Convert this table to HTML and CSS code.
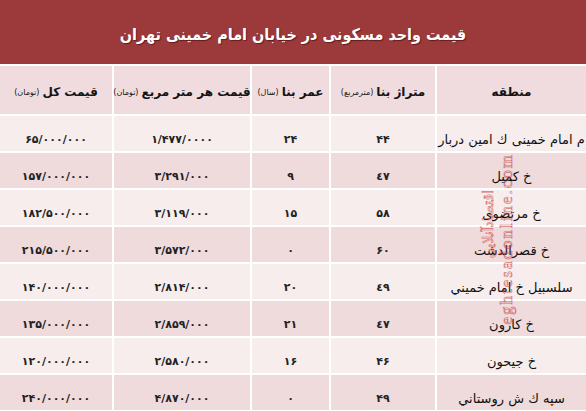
FILE: index.html
```html
<!DOCTYPE html>
<html lang="fa" dir="rtl">
<head>
<meta charset="utf-8">
<title>قیمت واحد مسکونی</title>
<link rel="stylesheet" href="styles.css">
</head>
<body>
<div class="page">
  <header class="title">قیمت واحد مسکونی در خیابان امام خمینی تهران</header>
  <div class="table">
    <div class="row head">
      <div class="cell">منطقه</div>
      <div class="cell">متراژ بنا <small>(مترمربع)</small></div>
      <div class="cell">عمر بنا <small>(سال)</small></div>
      <div class="cell">قیمت هر متر مربع <small>(تومان)</small></div>
      <div class="cell">قیمت کل <small>(تومان)</small></div>
    </div>
    <div class="row light">
      <div class="cell name">م امام خمینی ك امین دربار</div>
      <div class="cell num">۴۴</div>
      <div class="cell num">۲۴</div>
      <div class="cell num">۱/۴۷۷/۰۰۰۰</div>
      <div class="cell num">۶۵/۰۰۰/۰۰۰</div>
    </div>
    <div class="row pink">
      <div class="cell name">خ کمیل</div>
      <div class="cell num">٤٧</div>
      <div class="cell num">۹</div>
      <div class="cell num">۳/۲۹۱/۰۰۰</div>
      <div class="cell num">۱۵۷/۰۰۰/۰۰۰</div>
    </div>
    <div class="row light">
      <div class="cell name">خ مرتضوی</div>
      <div class="cell num">۵۸</div>
      <div class="cell num">۱۵</div>
      <div class="cell num">۳/۱۱۹/۰۰۰</div>
      <div class="cell num">۱۸۲/۵۰۰/۰۰۰</div>
    </div>
    <div class="row pink">
      <div class="cell name">خ قصرالدشت</div>
      <div class="cell num">۶۰</div>
      <div class="cell num">۰</div>
      <div class="cell num">۳/۵۷۲/۰۰۰</div>
      <div class="cell num">۲۱۵/۵۰۰/۰۰۰</div>
    </div>
    <div class="row light">
      <div class="cell name">سلسبیل خ امام خميني</div>
      <div class="cell num">٤٩</div>
      <div class="cell num">۲۰</div>
      <div class="cell num">۲/۸۱۴/۰۰۰</div>
      <div class="cell num">۱۴۰/۰۰۰/۰۰۰</div>
    </div>
    <div class="row pink">
      <div class="cell name">خ کارون</div>
      <div class="cell num">٤٧</div>
      <div class="cell num">۲۱</div>
      <div class="cell num">۲/۸۵۹/۰۰۰</div>
      <div class="cell num">۱۳۵/۰۰۰/۰۰۰</div>
    </div>
    <div class="row light">
      <div class="cell name">خ جیحون</div>
      <div class="cell num">۴۶</div>
      <div class="cell num">۱۶</div>
      <div class="cell num">۲/۵۸۰/۰۰۰</div>
      <div class="cell num">۱۲۰/۰۰۰/۰۰۰</div>
    </div>
    <div class="row pink">
      <div class="cell name">سپه ك ش روستاني</div>
      <div class="cell num">۴۹</div>
      <div class="cell num">۰</div>
      <div class="cell num">۴/۸۷۰/۰۰۰</div>
      <div class="cell num">۲۴۰/۰۰۰/۰۰۰</div>
    </div>
  </div>
  <div class="wm wm-latin" dir="ltr">eghtesadonline.com</div>
  <div class="wm wm-fa">اقتصادآنلاین</div>
</div>
</body>
</html>
```

FILE: styles.css
```css
html, body {
  margin: 0;
  padding: 0;
  background: #ffffff;
}

.page {
  position: relative;
  width: 586px;
  height: 411px;
  overflow: hidden;
  font-family: "DejaVu Sans", "Liberation Sans", sans-serif;
  color: #1c1c1c;
}

.title {
  height: 64px;
  display: flex;
  align-items: center;
  justify-content: center;
  padding-top: 4px;
  box-sizing: border-box;
  background: #9c3a3b;
  color: #ffffff;
  font-family: "DejaVu Sans Condensed", "DejaVu Sans", sans-serif;
  font-stretch: condensed;
  font-weight: bold;
  font-size: 16px;
  text-shadow: 1px 1px 1px rgba(60, 10, 10, 0.6);
  margin-bottom: 2px;
}

.table {
  display: grid;
  grid-template-columns: 149px 104px 77px 136px 112px;
  grid-template-rows: 48px repeat(8, 35px);
  gap: 2px;
  background: #ffffff;
}

.row {
  display: contents;
}

.cell {
  display: flex;
  align-items: center;
  justify-content: center;
  padding-top: 11px;
  box-sizing: border-box;
  white-space: nowrap;
}

.head .cell {
  padding-top: 4px;
  background: #f0dcdf;
  font-weight: bold;
  font-size: 12px;
  color: #141414;
}

.head small {
  font-size: 8px;
  font-weight: normal;
  margin-right: 3px;
}

.light .cell {
  background: #f7eded;
}

.pink .cell {
  background: #efdadc;
}

.name {
  font-size: 13px;
  color: #111111;
}

.num {
  font-size: 11px;
  font-weight: bold;
  letter-spacing: 2px;
  direction: ltr;
  color: #222222;
}

.wm {
  position: absolute;
  writing-mode: vertical-rl;
  transform: rotate(180deg);
  color: transparent;
  -webkit-text-stroke: 0.6px #c8413f;
  opacity: 0.7;
  white-space: nowrap;
}

.wm-latin {
  left: 497px;
  top: 153px;
  font-family: "Liberation Serif", serif;
  font-size: 17px;
  letter-spacing: 2px;
}

.wm-fa {
  left: 480px;
  top: 190px;
  font-family: "DejaVu Sans", sans-serif;
  font-size: 14px;
}
```
